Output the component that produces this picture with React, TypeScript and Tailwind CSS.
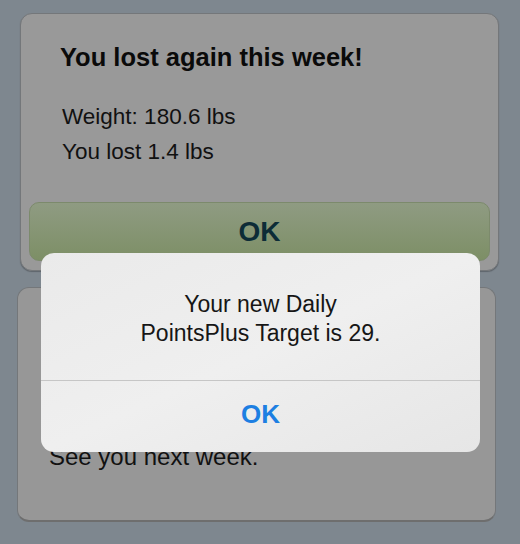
import React from 'react';

const font = { fontFamily: '"Liberation Sans", Arial, sans-serif' };

export default function App() {
  return (
    <div
      className="relative w-[520px] h-[544px] overflow-hidden bg-[#7e878f] flex flex-col"
      style={font}
    >
      {/* Weigh-in result card */}
      <div className="ml-[20px] mt-[13px] w-[479px] h-[258px] rounded-[12px] border border-[#74777a] bg-[#999999] flex flex-col shadow-[0_1px_1px_rgba(0,0,0,0.25)]">
        <h1 className="pl-[39px] pt-[28px] text-[25.5px] leading-[30px] font-bold text-[#0a0a0a]">
          You lost again this week!
        </h1>
        <div className="pl-[41px] mt-[27px] text-[22.5px] leading-[35px] text-[#111]">
          <p>Weight: 180.6 lbs</p>
          <p>You lost 1.4 lbs</p>
        </div>
        <button className="mx-[8px] mt-[33px] h-[59px] rounded-[10px] border border-[#7c8a6c] bg-gradient-to-b from-[#8f9b82] to-[#7d8f66] text-[28px] font-bold text-[#0d2c37] flex items-center justify-center">
          OK
        </button>
      </div>

      {/* Second card, mostly under the alert */}
      <div className="ml-[17px] mt-[16px] w-[479px] h-[235px] rounded-[12px] border border-[#74777a] border-b-2 border-b-[#6e6e6e] bg-[#979797]">
        <p className="pl-[31px] pt-[155px] text-[24px] leading-[28px] text-[#111]">
          See you next week.
        </p>
      </div>

      {/* iOS alert */}
      <div className="absolute left-[41px] top-[253px] w-[439px] h-[199px] rounded-[13px] bg-gradient-to-br from-[#eaeaea] via-[#efefef] to-[#e6e6e6] flex flex-col">
        <p className="pt-[37px] h-[127px] text-center text-[23px] leading-[29px] text-[#161616]">
          Your new Daily
          <br />
          PointsPlus Target is 29.
        </p>
        <div className="h-px bg-[#c6c6c6]" />
        <button className="flex-1 pb-[4px] flex items-center justify-center text-[26px] font-bold text-[#1d7fe2]">
          OK
        </button>
      </div>
    </div>
  );
}
